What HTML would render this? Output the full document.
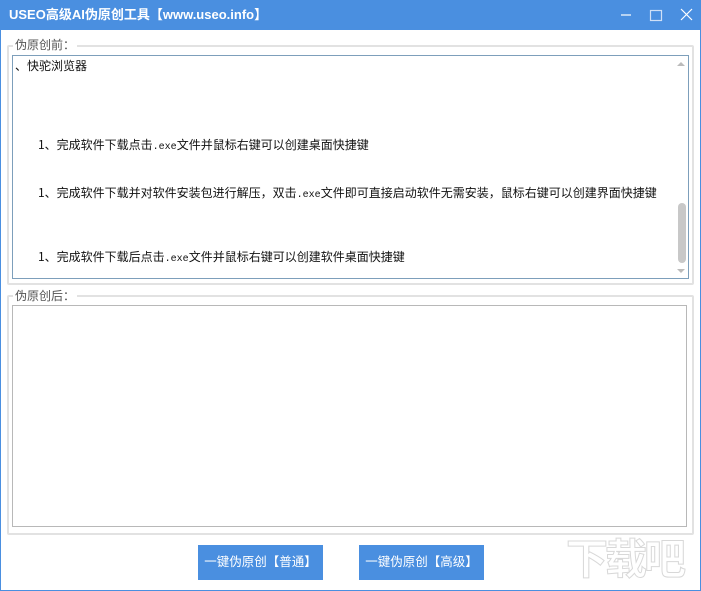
<!DOCTYPE html>
<html><head><meta charset="utf-8"><style>
*{margin:0;padding:0;box-sizing:border-box}
body{width:701px;height:591px;overflow:hidden;background:#fff;font-family:"Liberation Sans","Noto Sans CJK SC","WenQuanYi Zen Hei",sans-serif;position:relative}
.win{position:absolute;left:0;top:0;width:701px;height:591px;border:1px solid #4a8fe0;border-top:none}
.title{position:absolute;left:0;top:0;width:701px;height:30px;background:#4a8fe0;color:#fff;font-weight:bold;font-size:13px;line-height:30px;padding-left:9px}
.ctl{position:absolute;top:0;color:#fff}
.grp{position:absolute;border:2px solid #e2e2e2;border-radius:2px}
.lbl{position:absolute;background:#fff;font-size:12px;color:#555;padding:0 2px;line-height:14px}
.ta{position:absolute;background:#fff;border:1px solid #7d9fbb}
.ta2{border-color:#b8b8b8}
.ln{position:absolute;font-family:"Noto Sans CJK SC","WenQuanYi Zen Hei",sans-serif;font-size:12px;color:#111;white-space:nowrap;line-height:14px}
.ln span{font-family:"Liberation Mono",monospace;font-size:10px}
.btn{position:absolute;top:545px;width:125px;height:35px;background:#4a8fe0;color:#fff;font-size:12.5px;line-height:35px;text-align:center}
</style></head><body>
<div class="title">USEO高级AI伪原创工具【www.useo.info】</div>
<svg class="ctl" style="left:615px" width="86" height="30"><line x1="6" y1="15" x2="16" y2="15" stroke="#fff" stroke-width="1.2"/><rect x="35.5" y="10.5" width="11" height="10" fill="none" stroke="#cfe0f7" stroke-width="1.2"/><path d="M66 9L77 20M77 9L66 20" stroke="#fff" stroke-width="1.2"/></svg>
<div class="grp" style="left:7px;top:45px;width:687px;height:240px"></div>
<div class="lbl" style="left:13px;top:38px">伪原创前：</div>
<div class="ta" style="left:12px;top:55px;width:677px;height:224px">
<div style="position:absolute;right:1px;top:1px;width:12px;height:220px;background:#fff">
<div style="position:absolute;left:3px;top:146px;width:8px;height:60px;background:#c8c8c8;border-radius:4px"></div>
<div style="position:absolute;left:2px;top:5px;width:0;height:0;border:4px solid transparent;border-bottom-color:#bbb;border-top:none"></div>
<div style="position:absolute;left:2px;bottom:4px;width:0;height:0;border:4px solid transparent;border-top-color:#bbb;border-bottom:none"></div>
</div></div>
<div class="ln" style="left:15px;top:59px">、快驼浏览器</div>
<div class="ln" style="left:38px;top:138px">1、完成软件下载点击<span>.exe</span>文件并鼠标右键可以创建桌面快捷键</div>
<div class="ln" style="left:38px;top:186px">1、完成软件下载并对软件安装包进行解压，双击<span>.exe</span>文件即可直接启动软件无需安装，鼠标右键可以创建界面快捷键</div>
<div class="ln" style="left:38px;top:250px">1、完成软件下载后点击<span>.exe</span>文件并鼠标右键可以创建软件桌面快捷键</div>
<div class="grp" style="left:7px;top:295px;width:687px;height:240px"></div>
<div class="lbl" style="left:13px;top:289px">伪原创后：</div>
<div class="ta ta2" style="left:12px;top:305px;width:675px;height:222px"></div>
<div class="btn" style="left:198px">一键伪原创【普通】</div>
<div class="btn" style="left:359px">一键伪原创【高级】</div>
<div style="position:absolute;left:566px;top:536px;font-size:42px;font-weight:bold;color:#fff;-webkit-text-stroke:1px #d8d8d8;line-height:48px;white-space:nowrap;letter-spacing:-3px">下载吧</div>
<div class="win"></div>
</body></html>
